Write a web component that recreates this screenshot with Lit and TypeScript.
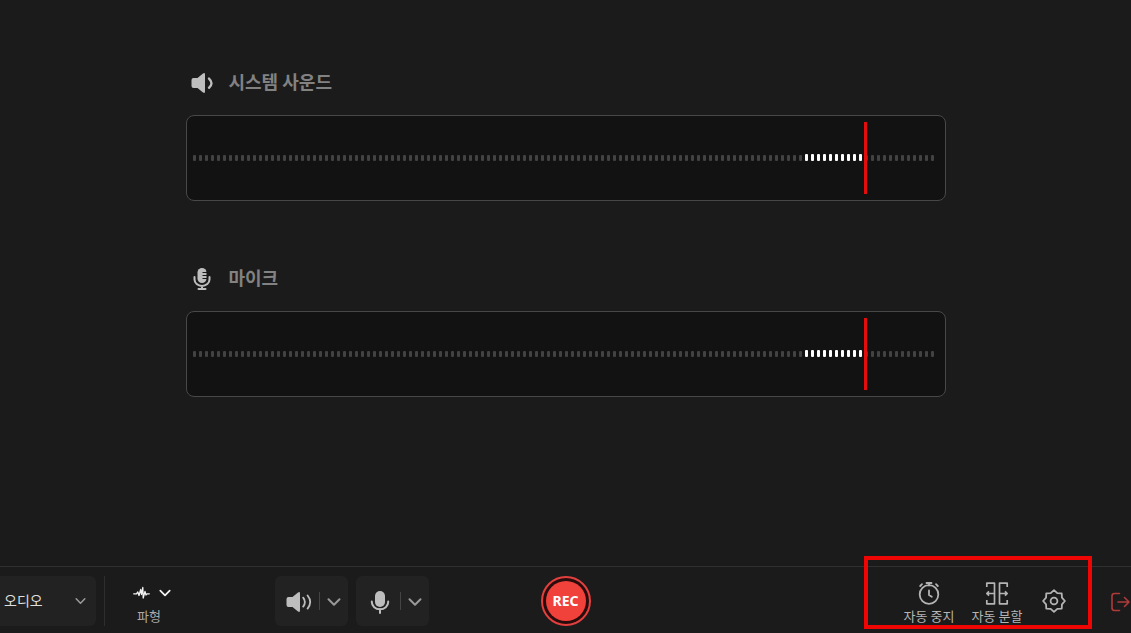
import { LitElement, html, css, svg } from "lit";
import { customElement, property } from "lit/decorators.js";
import { classMap } from "lit/directives/class-map.js";

const chevron = (w: number) => html`<svg class="chevron" width=${w} height="10" viewBox="0 0 14 10" fill="none" stroke="currentColor" stroke-width="2" stroke-linecap="round" stroke-linejoin="round" aria-hidden="true"><path d="M1.5 2.2 7 7.8l5.500-5.600" /></svg>`;

const speakerBody = svg`<path d="M.500 7Q.500 5 2.500 5H6.500L12 .600Q14 -.700 14 1.500V18.500Q14 20.700 12 19.400L6.500 15H2.500Q.500 15 .500 13Z" fill="currentColor" />`;

@customElement("level-meter")
export class LevelMeter extends LitElement {
  @property({ type: Number }) ticks = 124;
  @property({ type: Number }) from = 102;
  @property({ type: Number }) to = 112;

  static styles = css`
    :host {
      display: block;
    }
    .frame {
      box-sizing: border-box;
      height: 86px;
      padding: 0 10px 0 6px;
      border: 1px solid #484848;
      border-radius: 8px;
      background: #121212;
      display: flex;
      align-items: center;
    }
    .track {
      position: relative;
      flex: 1;
      height: 72px;
      display: flex;
      align-items: center;
      justify-content: space-between;
    }
    .tick {
      width: 3px;
      height: 6px;
      border-radius: 1px;
      background: #424242;
    }
    .tick.on {
      height: 7px;
      margin-bottom: 1px;
      background: #fff;
    }
    .limit {
      position: absolute;
      top: 0;
      bottom: 0;
      width: 3px;
      background: #e30d0d;
    }
  `;

  render() {
    return html`<div class="frame">
      <div class="track">
        ${Array.from({ length: this.ticks }, (_, i) => html`<span class=${classMap({ tick: true, on: i >= this.from && i < this.to })}></span>`)}
        <span class="limit" style="left:${((this.to + 0.3) / this.ticks) * 100}%"></span>
      </div>
    </div>`;
  }
}

@customElement("app-root")
export class AppRoot extends LitElement {
  static styles = css`
    :host {
      display: flex;
      flex-direction: column;
      min-height: 100vh;
      overflow: hidden;
      background: #1b1b1b;
      color: #b4b4b4;
      font-family: "Noto Sans CJK KR", "Noto Sans", sans-serif;
      font-size: 13px;
      line-height: 18px;
    }
    svg {
      display: block;
    }
    button,
    select {
      margin: 0;
      padding: 0;
      border: 0;
      background: none;
      color: inherit;
      font: inherit;
      cursor: pointer;
    }
    main {
      flex: 1;
      box-sizing: border-box;
      width: 100%;
      max-width: 760px;
      margin: 0 auto;
      padding-top: 67px;
      display: flex;
      flex-direction: column;
      gap: 62px;
    }
    .title {
      display: flex;
      align-items: center;
      gap: 14px;
      height: 32px;
      margin: 0 0 16px;
      padding-left: 5px;
      color: #828282;
      font-size: 18px;
      line-height: 28px;
      font-weight: 700;
    }
    .title svg {
      color: #bebebe;
    }
    .title span {
      padding-bottom: 4px;
    }
    footer {
      box-sizing: border-box;
      display: grid;
      grid-template-columns: 1fr auto 1fr;
      align-items: center;
      height: 67px;
      padding-top: 2px;
      border-top: 1px solid #303030;
    }
    .left,
    .right {
      display: flex;
      align-items: center;
      height: 50px;
    }
    .source {
      position: relative;
      width: 96px;
      height: 50px;
    }
    .source select {
      width: 100%;
      height: 100%;
      padding: 0 28px 2px 4px;
      appearance: none;
      border-radius: 0 6px 6px 0;
      background: #222;
      color: #dedede;
      font-size: 14px;
    }
    .source .chevron {
      position: absolute;
      right: 10px;
      top: 20px;
      color: #999;
      pointer-events: none;
    }
    .rule {
      width: 1px;
      height: 50px;
      background: #2e2e2e;
    }
    .source + .rule {
      margin-left: 8px;
    }
    .wave {
      width: 88px;
      height: 50px;
      color: #aaa;
      display: flex;
      flex-direction: column;
      align-items: center;
      gap: 6px;
      padding-top: 9px;
    }
    .wave-icons {
      display: flex;
      align-items: center;
      gap: 9px;
      height: 16px;
      padding-left: 5px;
      color: #f4f4f4;
    }
    .devices {
      display: flex;
      gap: 8px;
      margin-left: 82px;
    }
    .device {
      display: flex;
      align-items: center;
      width: 73px;
      height: 50px;
      border-radius: 6px;
      background: #222;
      color: #bebebe;
    }
    .device .toggle {
      flex: 1;
      height: 50px;
      display: grid;
      place-items: center;
      padding: 2px 0 0 4px;
    }
    .device .rule {
      height: 18px;
      background: #444;
    }
    .device .more {
      width: 28px;
      height: 50px;
      display: grid;
      place-items: center;
      padding-top: 2px;
      color: #999;
    }
    .rec {
      box-sizing: border-box;
      width: 50px;
      height: 50px;
      padding: 3px;
      border: 2px solid #e2403e;
      border-radius: 50%;
      background: #290c0c;
    }
    .rec span {
      display: block;
      height: 40px;
      border-radius: 50%;
      background: #f0413b;
      color: #fff;
      font: 700 14px/40px "Noto Sans", sans-serif;
      text-align: center;
    }
    .right {
      justify-content: flex-end;
    }
    .marked {
      position: relative;
      display: flex;
      align-items: center;
      height: 50px;
      padding-right: 18px;
    }
    .mark {
      position: absolute;
      inset: -20px -2px -3px -31px;
      border: 4px solid #f00505;
      pointer-events: none;
    }
    .tool {
      width: 68px;
      height: 50px;
      display: flex;
      flex-direction: column;
      align-items: center;
      gap: 1px;
      padding-top: 4px;
      white-space: nowrap;
    }
    .gear {
      width: 36px;
      height: 50px;
      margin-left: 5px;
      display: grid;
      place-items: center;
    }
    .exit {
      margin-left: 21px;
      padding-top: 2px;
      color: #b03a3a;
    }
  `;

  private renderSource(title: string, icon: unknown) {
    return html`<section>
      <h2 class="title">${icon}<span>${title}</span></h2>
      <level-meter></level-meter>
    </section>`;
  }

  private renderDevice(label: string, icon: unknown) {
    return html`<div class="device">
      <button class="toggle" aria-label=${label}>${icon}</button>
      <span class="rule"></span>
      <button class="more" aria-label=${label + " 옵션"}>${chevron(14)}</button>
    </div>`;
  }

  render() {
    const speaker = html`<svg width="24" height="24" viewBox="0 -2 24 24" fill="none" aria-hidden="true">${speakerBody}<path d="M18 5.600Q23 10.200 18 14.800" stroke="currentColor" stroke-width="2.400" stroke-linecap="round" /></svg>`;
    const speakerWide = html`<svg width="26" height="20" viewBox="0 0 26 20" fill="none" aria-hidden="true">${speakerBody}<path d="M17.200 5.600Q20.600 10 17.200 14.600M21.600 3.500Q26.800 10 21.600 16.600" stroke="currentColor" stroke-width="1.800" stroke-linecap="round" /></svg>`;
    const micLined = html`<svg width="24" height="24" viewBox="0 0 24 24" fill="none" aria-hidden="true"><rect x="6.500" y="1" width="9" height="15" rx="4.500" fill="currentColor" /><path d="M11.500 5.500h4.500M11.500 8.500h4.500M11.500 11.500h4.500" stroke="#1b1b1b" stroke-width="1" /><path d="M3.500 10v2.500a7.500 6.500 0 0 0 15 0V10M11 19v3M7.500 22h7" stroke="currentColor" stroke-width="2" stroke-linecap="round" /></svg>`;
    const mic = html`<svg width="20" height="24" viewBox="0 0 20 24" fill="none" aria-hidden="true"><rect x="5" y="1" width="10" height="16" rx="5" fill="currentColor" /><path d="M1.800 11.500v.500a8.200 7.300 0 0 0 16.400 0v-.500M10 19v4" stroke="currentColor" stroke-width="2" stroke-linecap="round" /></svg>`;
    const petals = Array.from({ length: 16 }, (_, i) => {
      const a = (i * Math.PI) / 8 - Math.PI / 2;
      const r = i % 2 ? 8.6 : 10.9;
      return `${(12 + r * Math.cos(a)).toFixed(2)},${(12 + r * Math.sin(a)).toFixed(2)}`;
    }).join(" ");

    return html`
      <main>
        ${this.renderSource("시스템 사운드", speaker)}
        ${this.renderSource("마이크", micLined)}
      </main>
      <footer>
        <div class="left">
          <div class="source">
            <select aria-label="녹화 모드"><option>오디오</option></select>
            ${chevron(11)}
          </div>
          <span class="rule"></span>
          <button class="wave">
            <span class="wave-icons">
              <svg width="17" height="14" viewBox="0 0 17 14" fill="none" stroke="currentColor" stroke-width="1.300" stroke-linecap="round" stroke-linejoin="round" aria-hidden="true"><path d="M.700 7.800H3.500L4.800 6 6 9.500 7.700 3.500 8.500 8.500 9.800 1.500 10.200 12 12 5.500 13 9 14 7.800h2.300" /></svg>
              ${chevron(12)}
            </span>
            <span>파형</span>
          </button>
          <div class="devices">
            ${this.renderDevice("스피커", speakerWide)}
            ${this.renderDevice("마이크", mic)}
          </div>
        </div>
        <button class="rec"><span>REC</span></button>
        <div class="right">
          <div class="marked">
            <button class="tool">
              <svg width="24" height="26" viewBox="0 0 24 26" fill="none" stroke="currentColor" stroke-width="1.800" stroke-linecap="round" stroke-linejoin="round" aria-hidden="true"><circle cx="12" cy="14.500" r="9.300" /><path d="M12 10.500v4.500l2.800 1.700M9.500 3h5M12 3v2.500M3.200 6l1.800-1.800M20.800 6l-1.800-1.800" /></svg>
              <span>자동 중지</span>
            </button>
            <button class="tool">
              <svg width="24" height="26" viewBox="0 0 24 26" fill="none" stroke="currentColor" stroke-width="1.700" stroke-linejoin="round" aria-hidden="true"><path d="M1.800 7V3.200H9.500v20.600H1.800V20M22.200 7V3.200H14.500v20.600h7.700V20M9.500 13.500H1.800M4 11.300l-2.200 2.200 2.200 2.200M14.500 13.500h7.700M20 11.300l2.200 2.200-2.200 2.200" /></svg>
              <span>자동 분할</span>
            </button>
            <button class="gear" aria-label="설정">
              <svg width="24" height="24" viewBox="0 0 24 24" fill="none" stroke="currentColor" stroke-width="1.800" stroke-linejoin="round" aria-hidden="true"><polygon points=${petals} /><circle cx="12" cy="12" r="3.400" /></svg>
            </button>
            <span class="mark"></span>
          </div>
          <button class="exit" aria-label="종료">
            <svg width="20" height="20" viewBox="0 0 20 20" fill="none" stroke="currentColor" stroke-width="1.600" stroke-linecap="round" stroke-linejoin="round" aria-hidden="true"><path d="M8.500 1.500H3.500Q1 1.500 1 4v12q0 2.500 2.500 2.500h5M7 10h11M13.500 5.500 18 10l-4.500 4.500" /></svg>
          </button>
        </div>
      </footer>
    `;
  }
}
